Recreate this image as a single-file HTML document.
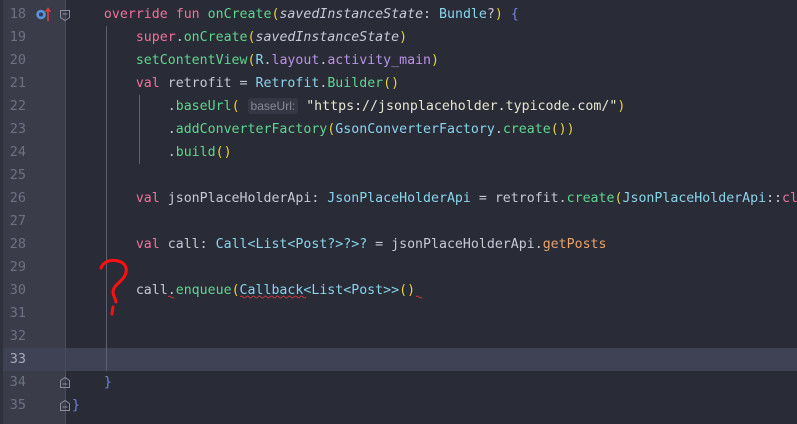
<!DOCTYPE html>
<html><head><meta charset="utf-8"><style>
html,body{margin:0;padding:0}
body{width:797px;height:424px;overflow:hidden;background:#292b37;position:relative;font-family:"DejaVu Sans Mono","Liberation Mono",monospace;font-size:13.25px}
.gut{position:absolute;left:0;top:0;width:65px;height:424px;background:#3a3c4a;border-left:3px solid #2f313c;box-sizing:border-box}
.sep{position:absolute;left:65px;top:0;width:1px;height:424px;background:#4a4d5c}
.hl{position:absolute;left:3px;top:348px;width:794px;height:23px;background:#3f4254}
.ln{position:absolute;left:0;width:26px;text-align:right;color:#6e7181;height:23px;line-height:23px;font-size:13.5px}
.code{position:absolute;left:72px;height:23px;line-height:23px;white-space:pre;color:#c6c8d6}
.k{color:#f0729c}.f{color:#5fd68f}.c{color:#8ad4ea}.p{color:#c9c9da;font-style:italic}.y{color:#e8d23c}.b{color:#7283e0}.pu{color:#b994e6}.o{color:#eba36a}.s{color:#e6e6d2}
.guide{position:absolute;width:1px;background:#5e6072}
.hint{background:#353744;color:#888a96;font-family:"Liberation Sans",sans-serif;font-size:12px;border-radius:3px;padding:1px 3px}
.fold{position:absolute;left:60px;width:10px;height:11px}
</style></head><body>
<div class="gut"></div>
<div class="hl"></div>
<div class="sep"></div>
<div class="guide" style="left:106px;top:26px;height:345px"></div>
<div class="guide" style="left:139px;top:95px;height:69px"></div>

<div class="ln" style="top:3px">18</div>
<div class="ln" style="top:26px">19</div>
<div class="ln" style="top:49px">20</div>
<div class="ln" style="top:72px">21</div>
<div class="ln" style="top:95px">22</div>
<div class="ln" style="top:118px">23</div>
<div class="ln" style="top:141px">24</div>
<div class="ln" style="top:164px">25</div>
<div class="ln" style="top:187px">26</div>
<div class="ln" style="top:210px">27</div>
<div class="ln" style="top:233px">28</div>
<div class="ln" style="top:256px">29</div>
<div class="ln" style="top:279px">30</div>
<div class="ln" style="top:302px">31</div>
<div class="ln" style="top:325px">32</div>
<div class="ln" style="top:348px;color:#a8abb8">33</div>
<div class="ln" style="top:371px">34</div>
<div class="ln" style="top:394px">35</div>

<svg style="position:absolute;left:35px;top:6px" width="16" height="16"><circle cx="6" cy="8.5" r="4.8" fill="#5b8fd6"/><circle cx="6" cy="8.5" r="2" fill="#2a3b5a"/><line x1="13" y1="3" x2="13" y2="15" stroke="#e84040" stroke-width="1.5"/><path d="M10.5 6 L13 2.5 L15.5 6" fill="none" stroke="#e84040" stroke-width="1.3"/></svg>
<svg class="fold" style="top:10px" viewBox="0 0 10 11"><path d="M0.5 0.5H9.5V7.5L5 10.5L0.5 7.5Z" fill="none" stroke="#8a8da0"/><line x1="2.5" y1="4" x2="7.5" y2="4" stroke="#8a8da0"/></svg>
<svg class="fold" style="top:377px" viewBox="0 0 10 11"><path d="M0.5 10.5H9.5V3.5L5 0.5L0.5 3.5Z" fill="none" stroke="#8a8da0"/><line x1="2.5" y1="7" x2="7.5" y2="7" stroke="#8a8da0"/></svg>
<svg class="fold" style="top:400px" viewBox="0 0 10 11"><path d="M0.5 10.5H9.5V3.5L5 0.5L0.5 3.5Z" fill="none" stroke="#8a8da0"/><line x1="2.5" y1="7" x2="7.5" y2="7" stroke="#8a8da0"/></svg>

<div class="code" style="top:3px">    <span class="k">override fun </span><span class="f">onCreate</span><span class="y">(</span><span class="p">savedInstanceState</span>: <span class="c">Bundle</span>?<span class="y">)</span> <span class="b">{</span></div>
<div class="code" style="top:26px">        <span class="k">super</span>.<span class="f">onCreate</span><span class="y">(</span><span class="p">savedInstanceState</span><span class="y">)</span></div>
<div class="code" style="top:49px">        <span class="f">setContentView</span><span class="y">(</span><span class="c">R</span>.<span class="pu">layout</span>.<span class="pu">activity_main</span><span class="y">)</span></div>
<div class="code" style="top:72px">        <span class="k">val</span> retrofit = <span class="c">Retrofit</span>.<span class="f">Builder</span><span class="y">()</span></div>
<div class="code" style="top:95px">            .<span class="f">baseUrl</span><span class="y">(</span> <span class="hint">baseUrl:</span> <span class="s">"https://jsonplaceholder.typicode.com/"</span><span class="y">)</span></div>
<div class="code" style="top:118px">            .<span class="f">addConverterFactory</span><span class="y">(</span><span class="c">GsonConverterFactory</span>.<span class="f">create</span><span class="y">())</span></div>
<div class="code" style="top:141px">            .<span class="f">build</span><span class="y">()</span></div>
<div class="code" style="top:187px">        <span class="k">val</span> jsonPlaceHolderApi: <span class="c">JsonPlaceHolderApi</span> = retrofit.<span class="f">create</span><span class="y">(</span><span class="c">JsonPlaceHolderApi</span>::<span class="k">class</span></div>
<div class="code" style="top:233px">        <span class="k">val</span> call: <span class="c">Call&lt;List&lt;Post?&gt;?&gt;?</span> = jsonPlaceHolderApi.<span class="o">getPosts</span></div>
<div class="code" style="top:279px">        call.<span class="f">enqueue</span><span class="y">(</span><span class="c">Callback&lt;List&lt;Post&gt;&gt;</span><span class="y">()</span></div>
<div class="code" style="top:371px">    <span class="b">}</span></div>
<div class="code" style="top:394px"><span class="b">}</span></div>

<svg style="position:absolute;left:0;top:0" width="797" height="424">
<path d="M168 297 q1.5 -2 3 0 q1.5 2 3 0" fill="none" stroke="#e04040" stroke-width="0.8"/>
<path d="M240 297 q1.5 -2 3 0 q1.5 2 3 0 q1.5 -2 3 0 q1.5 2 3 0 q1.5 -2 3 0 q1.5 2 3 0 q1.5 -2 3 0 q1.5 2 3 0 q1.5 -2 3 0 q1.5 2 3 0 q1.5 -2 3 0 q1.5 2 3 0 q1.5 -2 3 0 q1.5 2 3 0 q1.5 -2 3 0 q1.5 2 3 0 q1.5 -2 3 0 q1.5 2 3 0 q1.5 -2 3 0 q1.5 2 3 0 q1.5 -2 3 0 q1.5 2 3 0" fill="none" stroke="#e04040" stroke-width="0.8"/>
<path d="M416 297 q1.5 -2 3 0 q1.5 2 3 0" fill="none" stroke="#e04040" stroke-width="0.8"/>
<path d="M101 268 C103 262 110 259 118 261 C127 263 128 271 124 277 C120 283 113 286 113 292 C113 296 116 299 116 302" fill="none" stroke="#ff1010" stroke-width="3" stroke-linecap="round"/>
<path d="M113 307 L112 314" fill="none" stroke="#ff1010" stroke-width="3" stroke-linecap="round"/>
</svg>
</body></html>
